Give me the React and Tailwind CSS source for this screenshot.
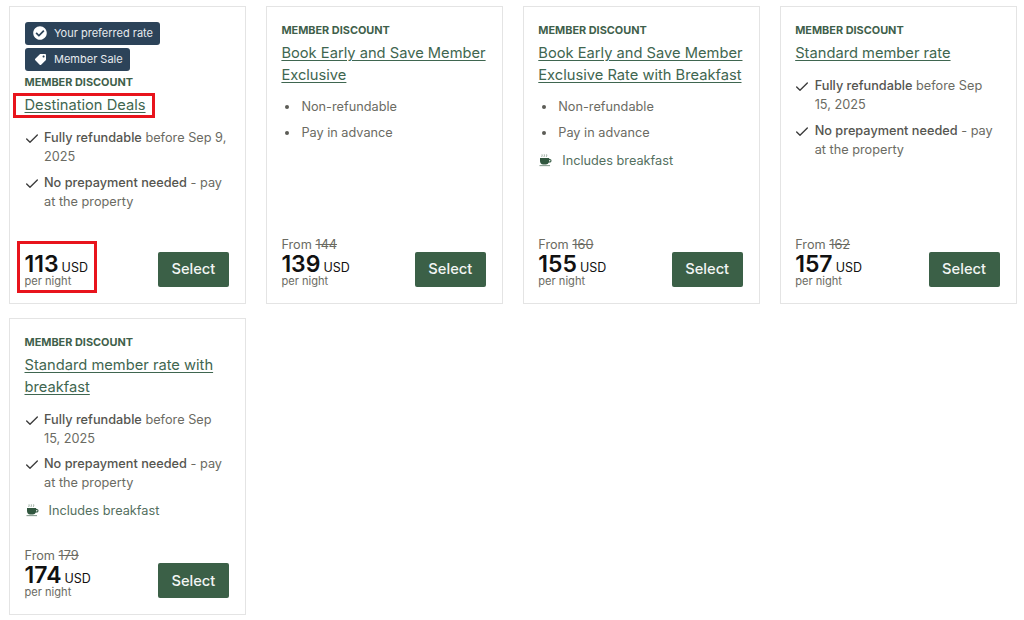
import React from 'react';
import { FaCheckCircle, FaTag } from 'react-icons/fa';
import { FiCheck } from 'react-icons/fi';

const refundable = (date) => [
  { bold: 'Fully refundable', rest: ` before ${date}` },
  { bold: 'No prepayment needed', rest: ' - pay at the property' },
];

const rates = [
  {
    title: 'Destination Deals',
    badges: true,
    marked: true,
    checks: refundable('Sep 9, 2025'),
    price: 113,
  },
  {
    title: 'Book Early and Save Member Exclusive',
    bullets: ['Non-refundable', 'Pay in advance'],
    was: 144,
    price: 139,
  },
  {
    title: 'Book Early and Save Member Exclusive Rate with Breakfast',
    bullets: ['Non-refundable', 'Pay in advance'],
    breakfast: true,
    was: 160,
    price: 155,
  },
  {
    title: 'Standard member rate',
    checks: refundable('Sep 15, 2025'),
    was: 162,
    price: 157,
  },
  {
    title: 'Standard member rate with breakfast',
    checks: refundable('Sep 15, 2025'),
    breakfast: true,
    was: 179,
    price: 174,
  },
];

function CoffeeIcon() {
  return (
    <svg width="13" height="14" viewBox="0 0 13 14" className="shrink-0 ml-[1px] -mt-[1px]">
      <path d="M3 4c-.7-.9.7-1.400 0-2.600M5.300 4c-.7-.9.7-1.400 0-2.600M7.600 4c-.7-.9.7-1.400 0-2.600" fill="none" stroke="#7f9487" strokeWidth=".8" />
      <path d="M1 5h9.200v1h.5c1.200 0 1.800.8 1.800 1.700s-.7 1.800-1.800 1.800h-.9c-.6 1.300-1.600 2-2.800 2H4.200C2.200 11.500 1 9.800 1 8z" fill="#31573f" />
      <path d="M10.200 7v1.400h.5c.5 0 .8-.3.8-.7s-.3-.7-.8-.7z" fill="#fff" />
      <rect x=".5" y="12.300" width="10.500" height=".8" fill="#5d7a68" />
    </svg>
  );
}

function Badge({ icon, children }) {
  return (
    <div className="flex items-center h-[23.5px] w-fit rounded-[3px] bg-[#2c4359] pl-[8.5px] pr-[7px] text-[11px] text-[#e6eaee]">
      <span className="flex w-[14px] justify-center mr-[7px] text-white">{icon}</span>
      {children}
    </div>
  );
}

function RateCard({ rate }) {
  return (
    <div className="flex flex-col h-[297.5px] border border-[#e4e4e4] bg-white pl-[14.5px] pr-[15px] pt-[15px] pb-[16px]">
      {rate.badges && (
        <div className="flex flex-col gap-[2.5px] mb-[3px] -mt-[0.5px]">
          <Badge icon={<FaCheckCircle size={14} />}>Your preferred rate</Badge>
          <Badge icon={<FaTag size={11} className="-scale-x-100" />}>Member Sale</Badge>
        </div>
      )}
      <div className="text-[10.9px] leading-[16px] font-bold text-[#3f5f4b]">MEMBER DISCOUNT</div>
      <div className="relative mt-[4px] text-[14.7px] leading-[22px] text-[#3f6650] underline underline-offset-2">
        {rate.title}
        {rate.marked && <div className="absolute -left-[12px] -top-[1px] w-[142px] h-[25px] border-[3px] border-[#e8141c]" />}
      </div>

      <div className={`flex flex-col text-[12.72px] leading-[19px] text-[#6b6b63] ${rate.checks ? 'mt-[12px]' : 'mt-[11px]'}`}>
        {rate.checks && rate.checks.map((c) => (
          <div key={c.bold} className="flex mb-[6.5px]">
            <FiCheck size={16} strokeWidth={2} className="shrink-0 mt-[3px] -ml-[1px] mr-[4.5px] text-[#3b3b3b]" />
            <div><span className="font-[450] text-[#55554f]">{c.bold}</span>{c.rest}</div>
          </div>
        ))}
        {rate.bullets && rate.bullets.map((b) => (
          <div key={b} className="flex items-center h-[19px] mb-[7px] pl-[4px]">
            <span className="w-[4px] h-[4px] rounded-full bg-[#5c5c56] mr-[12px]" />
            {b}
          </div>
        ))}
        {rate.breakfast && (
          <div className="flex items-center h-[19px] mt-[2px] gap-[10px] text-[#55705f]">
            <CoffeeIcon />
            Includes breakfast
          </div>
        )}
      </div>

      <div className="mt-auto flex items-end justify-between pr-[1px]">
        <div className="relative">
          {rate.was && (
            <div className="text-[12.72px] leading-[14px] text-[#6b6b63]">
              From <span className="line-through">{rate.was}</span>
            </div>
          )}
          <div className="flex items-baseline gap-[3px] leading-[16px] mt-[4px]">
            <span className="text-[23px] font-semibold text-[#111]">{rate.price}</span>
            <span className="text-[12.5px] text-[#111]">USD</span>
          </div>
          <div className="text-[11.1px] leading-[11px] text-[#6b6b63]">per night</div>
          {rate.marked && <div className="absolute -left-[8px] -top-[11px] w-[80px] h-[52px] border-[3px] border-[#e8141c]" />}
        </div>
        <button className="w-[71px] h-[35px] pt-[1px] rounded-[2px] bg-[#3b6047] text-[14.7px] font-medium text-[#f2f5f3]">Select</button>
      </div>
    </div>
  );
}

export default function App() {
  return (
    <div className="w-[1024px] h-[620px] overflow-hidden bg-white pl-[9px] pt-[6px] font-['Inter',sans-serif]">
      <div className="grid grid-cols-[236.9px_236.9px_236.9px_236.9px] gap-x-[20px] gap-y-[14px]">
        {rates.map((r) => <RateCard key={r.title} rate={r} />)}
      </div>
    </div>
  );
}
